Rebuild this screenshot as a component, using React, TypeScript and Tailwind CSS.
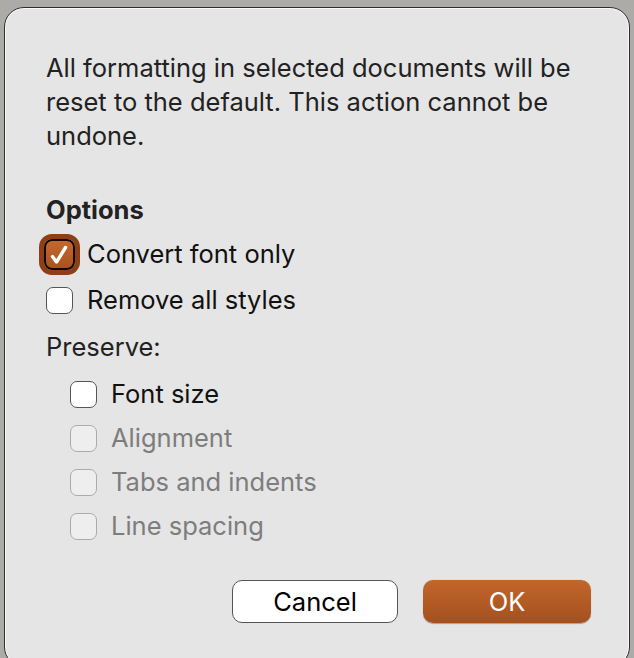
import { useState } from 'react';

type BoxProps = {
  checked?: boolean;
  focused?: boolean;
  disabled?: boolean;
};

function CheckBox({ checked, focused, disabled }: BoxProps) {
  if (checked) {
    return (
      <span
        className={
          '-m-[2px] flex h-[31px] w-[31px] shrink-0 items-center justify-center rounded-[8px] border-[2px] border-[#120600] bg-gradient-to-b from-[#c4682c] to-[#a9521f] ' +
          (focused ? 'shadow-[0_0_0_5px_#8e3f15]' : '')
        }
      >
        <svg width="27" height="27" viewBox="0 0 27 27" fill="none">
          <path d="M6.5 15.5 L10.5 21 L19.5 6.5" stroke="#fff" strokeWidth="3.4" strokeLinecap="round" strokeLinejoin="round" />
        </svg>
      </span>
    );
  }
  return (
    <span
      className={
        'block h-[27px] w-[27px] shrink-0 rounded-[7px] border-[1.5px] ' +
        (disabled ? 'border-[#ababab] bg-[#eeeeee]' : 'border-[#555555] bg-white')
      }
    />
  );
}

type RowProps = BoxProps & { label: string };

function CheckRow({ label, checked, focused, disabled }: RowProps) {
  return (
    <div className="flex h-[44px] items-center gap-[14px]">
      <CheckBox checked={checked} focused={focused} disabled={disabled} />
      <span className={disabled ? 'text-[#7d7d7d]' : 'text-[#111111]'}>{label}</span>
    </div>
  );
}

export default function App() {
  const [preserve] = useState([
    { label: 'Font size', disabled: false },
    { label: 'Alignment', disabled: true },
    { label: 'Tabs and indents', disabled: true },
    { label: 'Line spacing', disabled: true },
  ]);

  return (
    <div
      className="h-[658px] w-[634px] overflow-hidden bg-[#acaba7] pl-[4px] pt-[7px]"
      style={{ fontFamily: 'Inter, "Liberation Sans", sans-serif' }}
    >
      <div className="flex h-[660px] w-[626px] flex-col rounded-[20px] border-[1.5px] border-[#2e2e2e] bg-[#e5e5e5] pl-[41px] pr-[38px] pt-[43px] text-[25.5px] leading-[34px] shadow-[inset_0_0_0_1px_rgba(255,255,255,0.75)]">
        <p className="text-[#222222]">
          All formatting in selected documents will be reset to the default. This action cannot be undone.
        </p>

        <div className="mt-[40px] font-bold text-[#222222]">Options</div>

        <div className="mt-[5px]">
          <CheckRow label="Convert font only" checked focused />
        </div>
        <div className="mt-[2px]">
          <CheckRow label="Remove all styles" />
        </div>

        <div className="mt-[8px] text-[#222222]">Preserve:</div>

        <div className="mt-[8px] flex flex-col pl-[24px]">
          {preserve.map((p) => (
            <CheckRow key={p.label} label={p.label} disabled={p.disabled} />
          ))}
        </div>

        <div className="mt-[32px] flex justify-end gap-[25px]">
          <button className="h-[43px] w-[166px] rounded-[10px] border-[1.5px] border-[#555555] bg-white text-[25.5px] text-black">
            Cancel
          </button>
          <button className="h-[43px] w-[168px] rounded-[10px] bg-gradient-to-b from-[#c4662b] to-[#a3501f] text-[25.5px] text-white shadow-[0_0.5px_1px_rgba(0,0,0,0.3)]">
            OK
          </button>
        </div>
      </div>
    </div>
  );
}
